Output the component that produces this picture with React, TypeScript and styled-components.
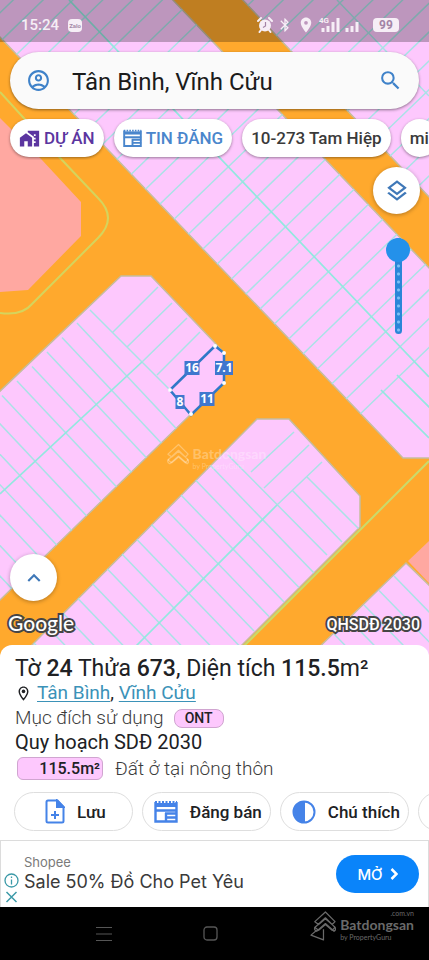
import React from "react";
import styled, { createGlobalStyle } from "styled-components";
import {
  MdBluetooth,
  MdHomeWork,
  MdKeyboardArrowUp,
  MdLocationOn,
  MdOutlineAccountCircle,
  MdOutlineLayers,
  MdOutlineLocationOn,
  MdSearch,
} from "react-icons/md";

const GlobalStyle = createGlobalStyle`
  * { box-sizing: border-box; }
  body { margin: 0; background: #000; font-family: Roboto, "Noto Sans", sans-serif; color: #202124; }
  button, input { font: inherit; color: inherit; }
`;

const Screen = styled.div`
  display: flex;
  flex-direction: column;
  min-height: 100vh;
  overflow: hidden;
`;

const MapArea = styled.main`
  position: relative;
  flex: 1;
  display: flex;
  flex-direction: column;
  margin-bottom: -12px;
  padding-bottom: 12px;
  overflow: hidden;
`;

const MapDrawing = styled.svg`
  position: absolute;
  inset: 0;
  width: 100%;
  height: 100%;
`;

const Overlay = styled.div`
  position: relative;
  flex: 1;
  display: flex;
  flex-direction: column;
`;

const StatusBar = styled.header`
  display: flex;
  align-items: center;
  height: 42px;
  padding: 8px 30px 0 21px;
  background: rgba(0, 0, 0, 0.25);
  color: #f6eef6;
  font-size: 15px;
  font-weight: 500;
`;

const ZaloBadge = styled.span`
  margin-left: 9px;
  width: 14px;
  line-height: 13px;
  border-radius: 4px;
  background: #f6eef6;
  color: #a58aa8;
  font-size: 6px;
  font-weight: 700;
  text-align: center;
`;

const StatusIcons = styled.div`
  display: flex;
  align-items: center;
  gap: 4px;
  margin-left: auto;
`;

const Battery = styled.span`
  margin-left: 9px;
  width: 26px;
  line-height: 14px;
  border-radius: 4px;
  background: #f6eef6;
  color: #a384a6;
  font-size: 12px;
  font-weight: 700;
  text-align: center;
`;

const SearchBar = styled.form`
  display: flex;
  align-items: center;
  height: 57px;
  margin: 10px 10px 0;
  padding: 0 16px;
  border-radius: 29px;
  background: #fafafa;
  box-shadow: 0 1px 3px rgba(0, 0, 0, 0.45);
  color: #3f82c9;
`;

const SearchInput = styled.input`
  flex: 1;
  min-width: 0;
  margin-left: 21px;
  padding: 2px 0 0;
  border: 0;
  outline: 0;
  background: none;
  color: #1b1b1b;
  font-size: 24px;
`;

const BareButton = styled.button`
  display: flex;
  padding: 0;
  border: 0;
  background: none;
`;

const ChipRow = styled.nav`
  display: flex;
  gap: 10px;
  padding: 10px 0 3px 10px;
  overflow: hidden;
`;

const Chip = styled.button<{ $color?: string }>`
  display: flex;
  align-items: center;
  flex: none;
  gap: 4px;
  height: 38px;
  padding: 0 9px;
  border: 0;
  border-radius: 19px;
  background: #fff;
  box-shadow: 0 1px 3px rgba(0, 0, 0, 0.4);
  color: ${(p) => p.$color ?? "#3a3a3a"};
  font-size: 17px;
  font-weight: 500;
  white-space: nowrap;
`;

const SideTools = styled.div`
  display: flex;
  flex-direction: column;
  align-items: center;
  align-self: flex-end;
  gap: 24px;
  margin-right: 9px;
  padding-top: 7px;
`;

const RoundButton = styled.button`
  display: grid;
  place-items: center;
  width: 47px;
  height: 47px;
  padding: 0;
  border: 0;
  border-radius: 50%;
  background: #fff;
  box-shadow: 0 1px 4px rgba(0, 0, 0, 0.3);
  color: #3f78b8;
`;

const OpacitySlider = styled.input`
  appearance: none;
  writing-mode: vertical-lr;
  width: 24px;
  height: 96px;
  margin: 0 -3px 0 0;
  background: none;
  &::-webkit-slider-runnable-track {
    width: 7px;
    border-radius: 4px;
    background: radial-gradient(circle, #7cc0f5 1px, transparent 2px) center top / 7px 8px, #2a86d8;
  }
  &::-webkit-slider-thumb {
    appearance: none;
    width: 24px;
    height: 24px;
    margin-left: -9px;
    border-radius: 50%;
    background: #2491ea;
  }
`;

const MapFooter = styled.div`
  display: flex;
  flex-direction: column;
  align-items: flex-start;
  gap: 8px;
  margin-top: auto;
  padding: 0 9px 8px 10px;
`;

const Credits = styled.div`
  display: flex;
  justify-content: space-between;
  align-items: center;
  align-self: stretch;
  margin-left: -2px;
  color: #fff;
  -webkit-text-stroke: 4px #454545;
  paint-order: stroke fill;
`;

const GoogleMark = styled.span`
  font: 500 21px/28px Lato, sans-serif;
`;

const LayerName = styled.span`
  padding-top: 3px;
  font-size: 16px;
  font-weight: 500;
`;

const Sheet = styled.section`
  position: relative;
  padding: 11px 0 9px;
  border-radius: 12px 12px 0 0;
  background: #fff;
`;

const Details = styled.div`
  padding: 0 15px;
`;

const Title = styled.h1`
  margin: 0;
  font-size: 23px;
  line-height: 26px;
  font-weight: 400;
  b { font-weight: 500; }
`;

const Line = styled.div<{ $muted?: boolean }>`
  display: flex;
  align-items: center;
  font-size: ${(p) => (p.$muted ? 19 : 20)}px;
  font-weight: ${(p) => (p.$muted ? 300 : 400)};
  line-height: ${(p) => (p.$muted ? 27 : 22)}px;
  color: ${(p) => (p.$muted ? "#3c3c3c" : "#202124")};
`;

const Places = styled.span`
  margin-left: 5px;
  font-size: 19px;
  white-space: pre;
  a {
    color: #3b92b8;
    text-decoration-thickness: 1px;
    text-underline-offset: 2px;
  }
`;

const LandTag = styled.span<{ $wide?: boolean }>`
  width: ${(p) => (p.$wide ? 86 : 50)}px;
  margin: ${(p) => (p.$wide ? "0 12px 0 2px" : "2px 0 0 10px")};
  padding-right: ${(p) => (p.$wide ? 2 : 0)}px;
  border: 1px solid #d0a5d0;
  border-radius: ${(p) => (p.$wide ? 6 : 8)}px;
  background: #fdc8fd;
  color: #202124;
  font-size: ${(p) => (p.$wide ? 16 : 14)}px;
  font-weight: 500;
  line-height: ${(p) => (p.$wide ? 21 : 17)}px;
  text-align: ${(p) => (p.$wide ? "right" : "center")};
`;

const PlanRow = styled(Line)`
  padding-top: 2px;
`;

const ActionRow = styled.div`
  display: flex;
  gap: 9px;
  padding: 10px 0 0 14px;
  overflow: hidden;
`;

const Action = styled.button<{ $wide?: boolean }>`
  display: flex;
  align-items: center;
  flex: none;
  gap: 12px;
  height: 39px;
  padding: ${(p) => (p.$wide ? "0 26px 0 30px" : "0 8px 0 11px")};
  border: 1px solid #dedede;
  border-radius: 20px;
  background: #fff;
  font-size: 17px;
  font-weight: 500;
  white-space: nowrap;
  svg { color: #4583e8; }
`;

const AdBanner = styled.aside`
  display: flex;
  align-items: center;
  height: 67px;
  padding: 0 9px 0 3px;
  border: 1px solid #dcdcdc;
  border-bottom: 0;
  background: #fff;
`;

const AdMarks = styled.div`
  display: flex;
  flex-direction: column;
  gap: 3px;
  align-self: flex-end;
  width: 20px;
  padding-bottom: 4px;
  color: #3c9aa8;
`;

const AdText = styled.div`
  flex: 1;
  padding-bottom: 4px;
  font-family: Inter, sans-serif;
`;

const Sponsor = styled.div`
  font-size: 13px;
  line-height: 20px;
  color: #7a7a7a;
`;

const Offer = styled.div`
  font-size: 18px;
  line-height: 20px;
  color: #3a3a3a;
`;

const OpenAd = styled.a`
  display: flex;
  align-items: center;
  justify-content: center;
  gap: 7px;
  width: 83px;
  height: 38px;
  border-radius: 19px;
  background: #0a84fa;
  color: #fff;
  font: 500 15px Inter, sans-serif;
  text-decoration: none;
`;

const SystemNav = styled.footer`
  display: flex;
  align-items: center;
  height: 53px;
  padding: 0 15px 0 96px;
  background: #000;
  color: #565656;
`;

const NavButtons = styled.div`
  display: flex;
  flex: 1;
  gap: 91px;
`;

const Brand = styled.div<{ $faint?: boolean }>`
  display: flex;
  align-items: center;
  gap: 4px;
  padding-bottom: ${(p) => (p.$faint ? 0 : 16)}px;
  color: ${(p) => (p.$faint ? "rgba(255,255,255,0.3)" : "#6a6a6a")};
  font-family: Lato, sans-serif;
`;

const BrandWords = styled.div`
  display: grid;
  font-size: 14px;
  font-weight: 700;
  line-height: 16px;
`;

const BrandSmall = styled.small<{ $end?: boolean }>`
  justify-self: ${(p) => (p.$end ? "end" : "start")};
  font-size: 7px;
  font-weight: 400;
  line-height: ${(p) => (p.$end ? 8 : 9)}px;
`;

const MapWatermark = styled.div`
  position: absolute;
  left: 50%;
  top: 458px;
  transform: translate(-50%, -50%);
`;

const range = (n: number, from = 0) => Array.from({ length: n }, (_, i) => i + from);

function Parcels() {
  return (
    <MapDrawing viewBox="0 0 429 657" preserveAspectRatio="xMidYMin slice" aria-hidden="true">
      <defs>
        <clipPath id="north"><path d="M0 37V0H173L429 268V458H403Z" /></clipPath>
        <clipPath id="east"><path d="M243 0H429V197Z" /></clipPath>
        <clipPath id="west"><path d="M0 391L121 276H151L215 343L170 390L190 415L0 600Z" /></clipPath>
        <clipPath id="south"><path d="M20 657L257 419H289L360 496V527L230 657Z" /></clipPath>
        <clipPath id="corner"><path d="M309 657L406 563L429 585V657Z" /></clipPath>
      </defs>
      <rect width="429" height="657" fill="#ffa92d" />
      <g fill="#fdc8fd" stroke="#c6bd9e" strokeWidth="1.5">
        <path d="M-3 34V-3H170L432 271V458H403Z" />
        <path d="M240 -3H432V200Z" />
        <path d="M-3 394L121 276H151L215 343L224 353V383L190 415L-3 603Z" />
        <path d="M20 657L257 419H289L360 496V527L230 657Z" />
        <path d="M309 657L406 563L432 588V657Z" />
      </g>
      <path d="M0 118L42 160L81 202V236L28 290L0 292Z" fill="#ffa8a1" />
      <path d="M408 561L429 541V583Z" fill="#ffa8a1" />
      <g fill="none" stroke="#d5d45c" strokeWidth="2">
        <path d="M0 92L62 160L98 198Q118 218 98 238L32 304Q22 316 0 313" />
        <path d="M429 461L233 657" stroke="#c9db6b" />
      </g>
      <g stroke="#a9e2e6" strokeWidth="1.5" fill="none">
        <g clipPath="url(#north)">
          {range(29, -18).map((i) => {
            const x = 271 + i * 14.3;
            const y = 212 + i * 15;
            return <path key={i} d={`M${x - 60} ${y + 58}L${x + 60} ${y - 58}`} />;
          })}
          <path d="M69 0L429 377M397 375L432 410M381 390L429 438" stroke="#92e8df" strokeWidth="1.7" />
        </g>
        <g clipPath="url(#east)">
          {range(16).map((i) => (
            <path key={i} d={`M${245 + i * 14.3} ${8 + i * 15}l110 -106`} />
          ))}
          <path d="M337 0L429 96" />
        </g>
        <g clipPath="url(#west)">
          {range(17).map((i) => (
            <path key={i} d={`M${77 - i * 15} ${323 + i * 14.5}l110 117`} />
          ))}
          <path d="M90 310L170 390M113 332L158 287M127 347L172 303M142 362L187 318M157 375L200 332" />
          <path d="M0 494L142 362" stroke="#92e8df" strokeWidth="1.7" />
        </g>
        <g clipPath="url(#south)">
          {range(16).map((i) => (
            <path key={i} d={`M${262 - i * 15 - 52} ${519 + i * 14.5 - 54}l104 108`} />
          ))}
          <path d="M228 455L327 555M292 490L342 542M307 477L360 530M251 472L294 432M264 488L309 445M277 505L322 462" />
          <path d="M125 657L277 505" stroke="#92e8df" strokeWidth="1.7" />
        </g>
        <g clipPath="url(#corner)">
          {range(6).map((i) => (
            <path key={i} d={`M${394 - i * 15} ${576 + i * 14.5}l80 82`} />
          ))}
        </g>
      </g>
      <path d="M170 390L215 346L224 353V383L191 415Z" fill="none" stroke="#2f78c8" strokeWidth="2.5" />
      {[[170, 390], [215, 346], [224, 353], [224, 383], [191, 414]].map(([x, y]) => (
        <circle key={`${x}-${y}`} cx={x} cy={y} r="2" fill="#fff" />
      ))}
      <g fontFamily="Open Sans, sans-serif" fontSize="12" fontWeight="700" textAnchor="middle">
        {([[192, 368, 15, "16"], [224, 368, 18, "7.1"], [207, 399, 15, "11"], [180, 402, 9, "8"]] as const).map(
          ([x, y, w, label]) => (
            <g key={label}>
              <rect x={x - w / 2} y={y - 7} width={w} height="14" fill="#3f77ce" />
              <text x={x} y={y + 4} fill="#fff">{label}</text>
            </g>
          ),
        )}
      </g>
    </MapDrawing>
  );
}

const AlarmIcon = () => (
  <svg width="16" height="16" viewBox="0 0 16 16">
    <path d="M1 4L4 1M15 4L12 1M4 13L2.500 15M12 13L13.500 15" stroke="currentColor" strokeWidth="2" strokeLinecap="round" />
    <circle cx="8" cy="8.500" r="6" fill="currentColor" />
    <path d="M8.500 5V9L6 10.500" fill="none" stroke="#a384a6" strokeWidth="1.200" />
  </svg>
);

const SignalIcon = ({ network }: { network?: boolean }) => (
  <svg width={network ? 22 : 15} height="18" viewBox={network ? "0 0 22 18" : "7 0 15 18"}>
    {network && <text x="0" y="7" fontSize="8" fontWeight="700" fill="currentColor">4G</text>}
    <path d="M4 12V16M9 10V16M14 6V16" stroke="currentColor" strokeWidth="3" transform={network ? "" : "translate(5 0)"} />
    {network && <path d="M19 2V16" stroke="currentColor" strokeWidth="3" />}
  </svg>
);

const ListingIcon = ({ size }: { size: number }) => (
  <svg width={size} height={size} viewBox="0 0 24 24" fill="none" stroke="currentColor" strokeWidth="2.4">
    <path d="M1.500 2V21.500H22.500V2" />
    <path d="M1 5H23" strokeWidth="4" />
    <path d="M1 2H23" strokeWidth="2" strokeDasharray="2 1.500" />
    <path d="M1 10.500H23M11 13.500H23M11 17.500H23M12 13V21" />
  </svg>
);

const SaveIcon = () => (
  <svg width="20" height="25" viewBox="0 0 20 25" fill="none" stroke="currentColor" strokeWidth="2">
    <path d="M12.500 1.500H3Q1.500 1.500 1.500 3V22Q1.500 23.500 3 23.500H17Q18.500 23.500 18.500 22V8Z" />
    <path d="M12 1.500V8H18.500Z" fill="currentColor" />
    <path d="M10 12V20M6 16H14" />
  </svg>
);

const LegendIcon = () => (
  <svg width="24" height="24" viewBox="0 0 24 24">
    <circle cx="12" cy="12" r="10.500" fill="none" stroke="currentColor" strokeWidth="2" />
    <path d="M13 1A11 11 0 0 0 13 23Z" fill="currentColor" />
  </svg>
);

function BrandMark({ faint }: { faint?: boolean }) {
  return (
    <Brand $faint={faint}>
      <svg width="26" height="31" viewBox="0 0 27 32" fill="none" stroke="currentColor" strokeWidth="1.300" strokeLinejoin="round">
        <path d="M5 12L16 2L26 12L23 15L16 9L9 15ZM5 18L16 8L26 18L23 21L16 15L9 21Z" />
        <path d="M6 17Q3 20 7 22L16 14L25 22Q28 20 25 17" />
        {!faint && <path d="M7 21L1 26L14 31V20" />}
      </svg>
      <BrandWords>
        {!faint && <BrandSmall $end>.com.vn</BrandSmall>}
        Batdongsan
        <BrandSmall>by PropertyGuru</BrandSmall>
      </BrandWords>
    </Brand>
  );
}

export default function App() {
  return (
    <Screen>
      <GlobalStyle />
      <MapArea>
        <Parcels />
        <MapWatermark><BrandMark faint /></MapWatermark>
        <Overlay>
          <StatusBar>
            <span>15:24</span>
            <ZaloBadge>Zalo</ZaloBadge>
            <StatusIcons>
              <AlarmIcon />
              <MdBluetooth size={16} />
              <MdLocationOn size={18} />
              <SignalIcon network />
              <SignalIcon />
              <Battery>99</Battery>
            </StatusIcons>
          </StatusBar>
          <SearchBar onSubmit={(e) => e.preventDefault()}>
            <MdOutlineAccountCircle size={25} />
            <SearchInput aria-label="Tìm kiếm" defaultValue="Tân Bình, Vĩnh Cửu" />
            <BareButton aria-label="Tìm"><MdSearch size={25} /></BareButton>
          </SearchBar>
          <ChipRow>
            <Chip $color="#5b35a0"><MdHomeWork size={21} />DỰ ÁN</Chip>
            <Chip $color="#4a86cc"><ListingIcon size={19} />TIN ĐĂNG</Chip>
            <Chip>10-273 Tam Hiệp</Chip>
            <Chip>mi</Chip>
          </ChipRow>
          <SideTools>
            <RoundButton aria-label="Lớp bản đồ"><MdOutlineLayers size={26} /></RoundButton>
            <OpacitySlider type="range" min="0" max="10" defaultValue="0" aria-label="Độ mờ" />
          </SideTools>
          <MapFooter>
            <RoundButton aria-label="Mở rộng"><MdKeyboardArrowUp size={26} /></RoundButton>
            <Credits>
              <GoogleMark>Google</GoogleMark>
              <LayerName>QHSDĐ 2030</LayerName>
            </Credits>
          </MapFooter>
        </Overlay>
      </MapArea>
      <Sheet>
        <Details>
          <Title>Tờ <b>24</b> Thửa <b>673</b>, Diện tích <b>115.5</b>m²</Title>
          <Line>
            <MdOutlineLocationOn size={17} />
            <Places><a href="#tan-binh">Tân Bình</a>, <a href="#vinh-cuu">Vĩnh Cửu</a></Places>
          </Line>
          <Line $muted>Mục đích sử dụng <LandTag>ONT</LandTag></Line>
          <Line>Quy hoạch SDĐ 2030</Line>
          <PlanRow $muted><LandTag $wide>115.5m²</LandTag>Đất ở tại nông thôn</PlanRow>
        </Details>
        <ActionRow>
          <Action $wide><SaveIcon />Lưu</Action>
          <Action><ListingIcon size={24} />Đăng bán</Action>
          <Action><LegendIcon />Chú thích</Action>
          <Action aria-label="Thêm"><ListingIcon size={24} /></Action>
        </ActionRow>
      </Sheet>
      <AdBanner>
        <AdMarks>
          <svg width="15" height="15" viewBox="0 0 15 15" fill="none" stroke="currentColor" strokeWidth="1.300">
            <circle cx="7.500" cy="7.500" r="6.500" />
            <path d="M7.500 6.500V11.500M7.500 3.500V5" />
          </svg>
          <svg width="15" height="12" viewBox="0 0 15 12" stroke="currentColor" strokeWidth="1.500">
            <path d="M2.500 1L12.500 11M12.500 1L2.500 11" />
          </svg>
        </AdMarks>
        <AdText>
          <Sponsor>Shopee</Sponsor>
          <Offer>Sale 50% Đồ Cho Pet Yêu</Offer>
        </AdText>
        <OpenAd href="#open">
          MỞ
          <svg width="8" height="12" viewBox="0 0 8 12" fill="none" stroke="currentColor" strokeWidth="2.500">
            <path d="M1.500 1L6.500 6L1.500 11" />
          </svg>
        </OpenAd>
      </AdBanner>
      <SystemNav>
        <NavButtons>
          <BareButton aria-label="Gần đây">
            <svg width="16" height="16" viewBox="0 0 16 16" stroke="currentColor"><path d="M0 1.500H16M0 8H16M0 14.500H16" /></svg>
          </BareButton>
          <BareButton aria-label="Màn hình chính">
            <svg width="16" height="16" viewBox="0 0 16 16" fill="none" stroke="currentColor" strokeWidth="1.300"><rect x="1" y="1" width="13" height="13" rx="3" /></svg>
          </BareButton>
        </NavButtons>
        <BrandMark />
      </SystemNav>
    </Screen>
  );
}
